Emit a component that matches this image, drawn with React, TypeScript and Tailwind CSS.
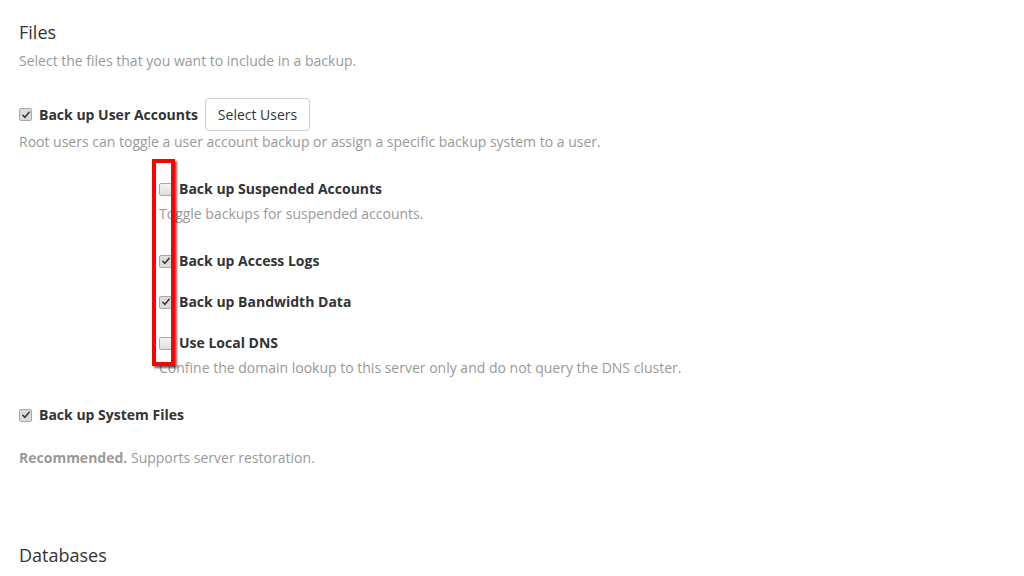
const font = { fontFamily: '"Open Sans", "Liberation Sans", sans-serif' }

const Check = ({ checked }: { checked: boolean }) => (
  <span
    className={`flex-shrink-0 w-[13px] h-[13px] rounded-[2px] border border-[#a9a9a9] flex items-center justify-center ${
      checked ? 'bg-[#dcdcdc]' : 'bg-gradient-to-b from-[#f4f4f4] to-[#dedede]'
    }`}
  >
    {checked && (
      <svg viewBox="0 0 12 12" className="w-[10px] h-[10px]">
        <path d="M2.2 6.3 L4.7 8.8 L9.8 2.8" fill="none" stroke="#3a3a3a" strokeWidth={1.9} strokeLinecap="round" strokeLinejoin="round" />
      </svg>
    )}
  </span>
)

const Row = ({ checked, label }: { checked: boolean; label: string }) => (
  <div className="flex items-center gap-[7px] h-5">
    <Check checked={checked} />
    <span className="text-[14px] font-bold text-[#333] leading-5">{label}</span>
  </div>
)

const Desc = ({ children, className = '' }: { children: React.ReactNode; className?: string }) => (
  <p className={`text-[14px] leading-5 text-[#999] ${className}`}>{children}</p>
)

export default function App() {
  return (
    <div className="relative w-[1024px] h-[576px] overflow-hidden bg-white px-[19px]" style={font}>
      <h2 className="pt-[22px] text-[18px] leading-5 text-[#333]">Files</h2>
      <Desc className="mt-[9px]">Select the files that you want to include in a backup.</Desc>

      <div className="mt-[27px] flex items-center h-[33px]">
        <Row checked label="Back up User Accounts" />
        <button className="ml-[7px] h-[33px] w-[105px] border border-[#ccc] rounded-[4px] bg-white text-[14px] text-[#333]">
          Select Users
        </button>
      </div>
      <Desc className="mt-px">Root users can toggle a user account backup or assign a specific backup system to a user.</Desc>

      <div className="ml-[140px]">
        <div className="mt-[27px]">
          <Row checked={false} label="Back up Suspended Accounts" />
        </div>
        <Desc className="mt-[5px]">Toggle backups for suspended accounts.</Desc>
        <div className="mt-[27px]">
          <Row checked label="Back up Access Logs" />
        </div>
        <div className="mt-[21px]">
          <Row checked label="Back up Bandwidth Data" />
        </div>
        <div className="mt-[21px]">
          <Row checked={false} label="Use Local DNS" />
        </div>
        <Desc className="mt-[5px]">Confine the domain lookup to this server only and do not query the DNS cluster.</Desc>
      </div>

      <div className="mt-[27px]">
        <Row checked label="Back up System Files" />
      </div>
      <Desc className="mt-[23px]">
        <span className="font-bold">Recommended.</span> Supports server restoration.
      </Desc>

      <h2 className="mt-[77px] text-[18px] leading-5 text-[#333]">Databases</h2>

      {/* highlight box */}
      <div className="absolute left-[152px] top-[159px] w-[23px] h-[207px] border-[4px] border-[#f00] shadow-[2px_2px_2px_rgba(0,0,0,0.6)]" />
    </div>
  )
}
